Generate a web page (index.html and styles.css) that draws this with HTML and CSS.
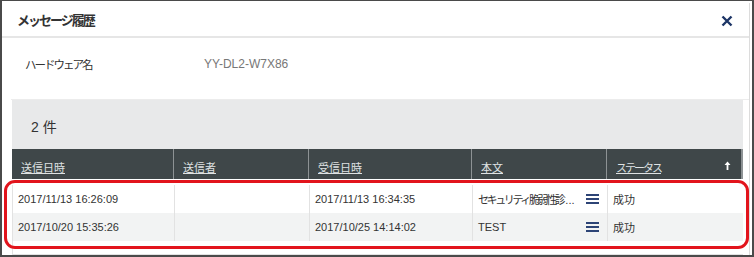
FILE: index.html
```html
<!DOCTYPE html>
<html>
<head>
    <title>メッセージ履歴</title>
    <link rel="stylesheet" href="styles.css">
</head>
<body>
    <div class="dialog">
        <div class="dialog-header">
            <h1>メッセージ履歴</h1>
            <button class="close" title="閉じる">
                <svg width="12" height="12" viewBox="0 0 12 12">
                    <path d="M1.5 1.5 L10.5 10.5 M10.5 1.5 L1.5 10.5" stroke="#1d3566" stroke-width="2.4" fill="none"/>
                </svg>
            </button>
        </div>

        <div class="info-row">
            <span class="label">ハードウェア名</span>
            <span class="value">YY-DL2-W7X86</span>
        </div>

        <div class="result-panel">
            <div class="count">2 件</div>
            <div class="list-head">
                <div class="cell"><a href="#">送信日時</a></div>
                <div class="cell"><a href="#">送信者</a></div>
                <div class="cell"><a href="#">受信日時</a></div>
                <div class="cell"><a href="#">本文</a></div>
                <div class="cell sorted">
                    <a href="#" class="kana">ステータス</a>
                    <svg class="sort" width="7" height="9" viewBox="0 0 7 9">
                        <path d="M3.5 0.5 L6.5 4 L4.4 4 L4.4 9 L2.6 9 L2.6 4 L0.5 4 Z" fill="#ffffff"/>
                    </svg>
                </div>
            </div>
            <div class="list-body">
                <div class="row">
                    <div class="cell">2017/11/13 16:26:09</div>
                    <div class="cell"></div>
                    <div class="cell">2017/11/13 16:34:35</div>
                    <div class="cell body-cell">
                        <span class="text kana" title="セキュリティ脆弱性診断のお知らせ">セキュリティ脆弱性診<span class="dots">...</span></span>
                        <span class="menu"><i></i><i></i><i></i></span>
                    </div>
                    <div class="cell">成功</div>
                </div>
                <div class="row alt">
                    <div class="cell">2017/10/20 15:35:26</div>
                    <div class="cell"></div>
                    <div class="cell">2017/10/25 14:14:02</div>
                    <div class="cell body-cell">
                        <span class="text">TEST</span>
                        <span class="menu"><i></i><i></i><i></i></span>
                    </div>
                    <div class="cell">成功</div>
                </div>
            </div>
        </div>

        <!-- annotation frame around the rows -->
        <div class="highlight"></div>
    </div>
</body>
</html>
```

FILE: styles.css
```css
* {
    margin: 0;
    padding: 0;
    box-sizing: border-box;
}

body {
    background: #ffffff;
    font-family: "Liberation Sans", "Noto Sans CJK JP", sans-serif;
    color: #333333;
}

.dialog {
    position: relative;
    width: 754px;
    height: 257px;
    border: 1px solid #4a4a4a;
    border-left-width: 2px;
    border-right-width: 2px;
    border-bottom-width: 2px;
    overflow: hidden;
}

.dialog::after {
    content: "";
    position: absolute;
    top: 2px;
    bottom: 0;
    right: 2px;
    border-right: 1px solid #dcdcdc;
}

.dialog-header {
    height: 37px;
    display: flex;
    align-items: center;
    justify-content: space-between;
    padding: 0 16px 0 15px;
    margin-right: 3px;
    border-bottom: 2px solid #e6e6e6;
}

.dialog-header h1 {
    font-size: 13px;
    font-weight: bold;
    letter-spacing: -2px;
    color: #333333;
    margin-top: 2px;
}

.close {
    border: none;
    background: none;
    cursor: pointer;
    display: flex;
    margin-top: 5px;
}

.info-row {
    height: 62px;
    display: flex;
    align-items: center;
    padding: 0 0 10px 14px;
    margin: 0 3px 0 9px;
    border-bottom: 1px solid #ececec;
    font-size: 12px;
}

.info-row .label {
    width: 179px;
    font-size: 11.5px;
    letter-spacing: -2px;
    color: #333333;
}

.info-row .value {
    color: #777777;
}

.result-panel {
    margin-left: 10px;
    width: 731px;
}

.count {
    height: 49px;
    background: #e8e9ea;
    padding: 16px 0 0 19px;
    font-size: 14px;
    color: #333333;
}

.kana {
    letter-spacing: -2px;
}

.list-head,
.row {
    display: grid;
    grid-template-columns: 161px 135px 163px 135px 135px;
}

.list-head {
    height: 30px;
    background: #3f4749;
    border-right: 2px solid #8d9294;
}

.list-head .cell {
    display: flex;
    align-items: center;
    padding: 6px 0 0 9px;
    border-left: 1px solid #8d9294;
    font-size: 11px;
}

.list-head .cell:first-child {
    border-left: none;
}

.list-head a {
    color: #dfe2e3;
    text-decoration: underline;
}

.sorted {
    justify-content: space-between;
    padding-right: 10px !important;
}

.sort {
    margin-top: -4px;
}

.list-body {
    margin-top: 6px;
    height: 70px;
    border-left: 1px solid #e2e2e2;
    border-bottom: 1px solid #e2e2e2;
}

.row {
    height: 28px;
    font-size: 11px;
    color: #333333;
}

.row.alt {
    background: #f2f3f3;
}

.row .cell {
    display: flex;
    align-items: center;
    padding-left: 5px;
    border-left: 1px solid #e2e2e2;
    white-space: nowrap;
}

.row .cell:first-child {
    border-left: none;
}

.body-cell {
    justify-content: space-between;
    padding-right: 8px;
}

.body-cell .kana {
    letter-spacing: -2.4px;
}

.dots {
    letter-spacing: 0;
    margin-left: 2px;
}

.menu {
    display: flex;
    flex-direction: column;
    gap: 2px;
    width: 13px;
    flex-shrink: 0;
}

.menu i {
    display: block;
    height: 2px;
    background: #2d4476;
}

.highlight {
    position: absolute;
    left: 2px;
    top: 179px;
    width: 745px;
    height: 69px;
    border: 3px solid #e2141c;
    border-radius: 11px;
}
```
